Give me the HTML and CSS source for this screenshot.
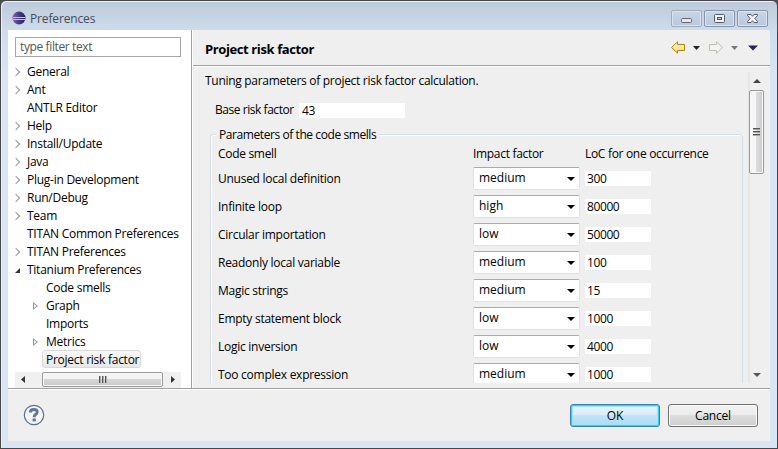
FILE: index.html
```html
<!DOCTYPE html>
<html lang="en">
<head>
<meta charset="utf-8">
<title>Preferences</title>
<link rel="stylesheet" href="styles.css">
</head>
<body>
<div class="window">
  <header class="titlebar">
    <svg class="logo" width="15" height="14" viewBox="0 0 15 14">
      <defs><linearGradient id="globe" x1="0" x2="1"><stop offset="0" stop-color="#756baa"/><stop offset=".5" stop-color="#443b83"/><stop offset="1" stop-color="#242158"/></linearGradient></defs>
      <circle cx="6" cy="7" r="5.8" fill="#e8b9d0"/><circle cx="8" cy="7" r="6.5" fill="url(#globe)"/>
      <path d="M2 6.5H14M2 8.5H14" stroke="#c3c1df" stroke-width="1"/>
    </svg>
    <span class="title">Preferences</span>
    <div class="controls">
      <span><svg width="29" height="15"><rect x="9.5" y="7.5" width="10" height="4" rx="1" fill="#e5e7ea" stroke="#62666f"/></svg></span>
      <span><svg width="29" height="15"><rect x="9.5" y="3.5" width="10" height="8" rx="1" fill="#f0f1f5" stroke="#535b70"/><rect x="12.5" y="6.5" width="4" height="2" fill="#b7c5d8" stroke="#535b70"/></svg></span>
      <span><svg width="29" height="15"><path d="M9.500 3.500H13L14.500 5.300 16 3.500H19.500V4.500L16.800 7.500 19.500 10.500V11.500H16L14.500 9.700 13 11.500H9.500V10.500L12.200 7.500 9.500 4.500Z" fill="#f1f2f5" stroke="#535b70"/></svg></span>
    </div>
  </header>
  <div class="content">
    <main class="panes">
      <aside class="sidebar">
        <div class="filter">type filter text</div>
        <ul class="tree">
          <li class="closed"><span>General</span></li>
          <li class="closed"><span>Ant</span></li>
          <li><span>ANTLR Editor</span></li>
          <li class="closed"><span>Help</span></li>
          <li class="closed"><span>Install/Update</span></li>
          <li class="closed"><span>Java</span></li>
          <li class="closed"><span>Plug-in Development</span></li>
          <li class="closed"><span>Run/Debug</span></li>
          <li class="closed"><span>Team</span></li>
          <li><span>TITAN Common Preferences</span></li>
          <li class="closed"><span>TITAN Preferences</span></li>
          <li class="open"><span>Titanium Preferences</span></li>
          <li class="child"><span>Code smells</span></li>
          <li class="child branch"><span>Graph</span></li>
          <li class="child"><span>Imports</span></li>
          <li class="child branch"><span>Metrics</span></li>
          <li class="child selected"><span>Project risk factor</span></li>
        </ul>
        <div class="hscroll">
          <svg width="27" height="16"><path d="M10 4V11L6 7.500Z" fill="#333"/></svg>
          <div class="hthumb"><i></i><i></i><i></i></div>
          <svg width="18" height="16"><path d="M8 4V11L12 7.500Z" fill="#333"/></svg>
        </div>
      </aside>
      <section class="page">
        <div class="page-head">
          <h1>Project risk factor</h1>
          <svg class="nav" width="90" height="16" viewBox="0 0 90 16">
            <defs><linearGradient id="gold" x2="0" y2="1"><stop offset="0" stop-color="#fffbdc"/><stop offset="1" stop-color="#f5d96b"/></linearGradient></defs>
            <path d="M1.500 7.500 7.500 1.800V4.500H14.500V10.500H7.500V13.200Z" fill="url(#gold)" stroke="#b9800d" stroke-linejoin="round"/>
            <path d="M23 6H30L26.500 10Z" fill="#252525"/>
            <path d="M52.500 7.500 46.500 1.800V4.500H39.500V10.500H46.500V13.200Z" fill="#f3f3ef" stroke="#bdbdb7" stroke-linejoin="round"/>
            <path d="M61 6H68L64.500 10Z" fill="#777"/>
            <path d="M78 5.500H88L83 10.500Z" fill="#27215d"/>
          </svg>
        </div>
        <div class="page-body">
          <div class="form">
            <p class="intro">Tuning parameters of project risk factor calculation.</p>
            <div class="base"><span>Base risk factor</span><div class="field">43</div></div>
            <div class="group">
              <div class="legend">Parameters of the code smells</div>
              <div class="row heading"><span>Code smell</span><span>Impact factor</span><span>LoC for one occurrence</span></div>
              <div class="row"><span>Unused local definition</span><div class="combo">medium</div><div class="field">300</div></div>
              <div class="row"><span>Infinite loop</span><div class="combo">high</div><div class="field">80000</div></div>
              <div class="row"><span>Circular importation</span><div class="combo">low</div><div class="field">50000</div></div>
              <div class="row"><span>Readonly local variable</span><div class="combo">medium</div><div class="field">100</div></div>
              <div class="row"><span>Magic strings</span><div class="combo">medium</div><div class="field">15</div></div>
              <div class="row"><span>Empty statement block</span><div class="combo">low</div><div class="field">1000</div></div>
              <div class="row"><span>Logic inversion</span><div class="combo">low</div><div class="field">4000</div></div>
              <div class="row"><span>Too complex expression</span><div class="combo">medium</div><div class="field">1000</div></div>
            </div>
          </div>
          <div class="vscroll">
            <svg width="16" height="18"><path d="M5 11H13L9 7Z" fill="#444"/></svg>
            <div class="vthumb"><i></i><i></i><i></i></div>
            <svg width="16" height="18"><path d="M5 8H13L9 12Z" fill="#555"/></svg>
          </div>
        </div>
      </section>
    </main>
    <footer class="footer">
      <svg class="help" width="22" height="22" viewBox="0 0 22 22"><circle cx="11" cy="11" r="9.700" fill="#f5f6f8" stroke="#5b7090" stroke-width="1.200"/><path d="M7.300 8.500Q7.300 5.500 10.900 5.500Q14.200 5.500 14.200 8.100Q14.200 9.700 12.500 10.600Q11.200 11.400 11.200 13.200" fill="none" stroke="#5f7698" stroke-width="2.900"/><rect x="9.600" y="14.500" width="3.200" height="2.900" fill="#5f7698"/></svg>
      <button class="ok">OK</button>
      <button>Cancel</button>
    </footer>
  </div>
</div>
</body>
</html>
```
FILE: styles.css
```css
* { box-sizing: border-box; }
body { margin: 0; background: #4d4a50; overflow: hidden; font: 12px/18px "Open Sans", "Noto Sans", sans-serif; letter-spacing: -.26px; color: #000; }
svg { display: block; flex: none; }
.window { width: 778px; height: 449px; border: 1px solid #48464d; border-radius: 6px 6px 0 0; background: linear-gradient(#bdcad9, #cedcec 30px, #d9e5f2 75px); padding: 0 7px 7px; box-shadow: inset 1px 1px #e9f1fa; display: flex; flex-direction: column; }
.titlebar { height: 29px; flex: none; display: flex; align-items: flex-start; }
.logo { margin: 10px 0 0 3px; }
.title { margin: 9px 0 0 4px; color: #454d59; letter-spacing: -.15px; }
.controls { display: flex; gap: 2px; margin: 9px 2px 0 auto; }
.controls span { width: 31px; height: 17px; border: 1px solid #8695ad; border-radius: 2px; background: linear-gradient(#c9d6e5, #b8c9dc); box-shadow: inset 0 0 0 1px #d9e4f0; }
.controls span:first-child { border-color: #9eabb9; }
.content { flex: 1; min-height: 0; background: #efefef; display: flex; flex-direction: column; }
.panes { height: 359px; flex: none; display: flex; border-bottom: 1px solid #a0a0a0; box-shadow: 0 1px #fff; }
.sidebar { width: 184px; flex: none; background: #fff; border-right: 1px solid #a0a0a0; padding: 7px 10px 0 7px; }
.filter { width: 166px; height: 20px; border: 1px solid #a5a5ad; padding: 0 4px; color: #555; letter-spacing: -.4px; }
.filter { letter-spacing: -.38px; }
.tree { list-style: none; height: 315px; margin: 0; padding: 5px 0 0; }
.tree li { height: 18px; line-height: 19px; padding-left: 12px; white-space: nowrap; position: relative; }
.tree .child { padding-left: 31px; }
.closed::before { content: ""; position: absolute; left: -2px; top: 7px; width: 5px; height: 5px; border: solid #969696; border-width: 1px 1px 0 0; transform: rotate(45deg); }
.open::before { content: ""; position: absolute; left: 0; top: 8px; width: 5px; height: 5px; background: #333; clip-path: polygon(100% 0, 100% 100%, 0 100%); }
.branch::before { content: ""; position: absolute; left: 18px; top: 6px; width: 5px; height: 8px; background: #999; clip-path: polygon(0 0, 100% 50%, 0 100%, 0 0, 1px 2px, 1px 6px, 3.5px 50%, 1px 2px); }
.selected span { display: block; width: 99px; height: 18px; line-height: 17px; margin-left: -4px; padding: 0 3px; border: 1px solid #d9d9d9; border-radius: 3px; background: linear-gradient(#f9f9f9, #e7e7e7); }
.hscroll { height: 16px; width: 166px; display: flex; background: #f0f0f0; }
.hthumb { width: 121px; height: 15px; border: 1px solid #999; border-radius: 2px; background: linear-gradient(#f4f4f4 45%, #d6d7da 50%, #c9cacc); box-shadow: inset 0 0 0 1px #f9f9f9; display: flex; justify-content: center; align-items: center; gap: 1px; }
.hthumb i { width: 2px; height: 7px; border-left: 1px solid #555; background: #aaa; }
.page { flex: 1; min-width: 0; border-left: 1px solid #fff; }
.page-head { height: 36px; border-bottom: 1px solid #a0a0a0; box-shadow: 0 1px #fff; display: flex; justify-content: space-between; padding: 0 10px 0 12px; }
h1 { font-size: 13px; line-height: 18px; letter-spacing: -.39px; margin: 10px 0 0; }
.nav { margin-top: 10px; }
.page-body { height: 317px; margin-top: 5px; display: flex; justify-content: space-between; padding: 1px 6px 0 12px; overflow: hidden; }
.form { width: 538px; height: 312px; overflow: hidden; margin-top: -1px; }
.intro { margin: 0; line-height: 19px; height: 18px; letter-spacing: -.29px; }
.base { display: flex; align-items: center; height: 16px; margin: 13px 0 0 10px; }
.base > span { width: 84px; white-space: nowrap; letter-spacing: -.45px; }
.base .field { width: 106px; }
.field { width: 66px; height: 15px; line-height: 15px; padding-left: 3px; background: #fff; letter-spacing: -.4px; }
.group { height: 300px; margin: 16px 0 0 5px; width: 533px; border: 1px solid #d3dee8; border-radius: 3px; box-shadow: inset 1px 1px #fff, 1px 0 #fff; padding: 0 7px; }
.legend { width: max-content; height: 18px; line-height: 20px; margin-top: -10px; margin-left: -2px; padding: 0 3px; background: #efefef; letter-spacing: -.42px; }
.row { height: 28px; display: grid; grid-template-columns: 255px 112px 140px; align-items: center; white-space: nowrap; }
.row .field { margin-bottom: 2px; padding-left: 2px; }
.heading { height: 22px; line-height: 20px; letter-spacing: -.31px; }
.combo { position: relative; width: 107px; height: 23px; margin-bottom: 2px; border: 1px solid #dfe1e5; border-top-color: #aaa; border-radius: 2px; background: #fff; padding-left: 5px; line-height: 20px; letter-spacing: 0; }
.combo::after { content: ""; position: absolute; right: 4px; top: 9px; border: solid transparent; border-width: 4px 4px 0; border-top-color: #000; }
.vscroll { width: 16px; height: 311px; display: flex; flex-direction: column; background: linear-gradient(90deg, #e3e3e3, #efefef 3px); }
.vthumb { height: 84px; width: 15px; margin-left: 1px; border: 1px solid #999; border-radius: 2px; background: linear-gradient(90deg, #f6f6f6 45%, #dcdcde 50%, #c9cacc); box-shadow: inset 0 0 0 1px #f9f9f9; display: flex; flex-direction: column; align-items: center; justify-content: center; gap: 1px; }
.vthumb i { height: 2px; width: 7px; border-top: 1px solid #555; background: #aaa; }
.vscroll svg:last-child { margin-top: auto; }
.footer { flex: 1; display: flex; padding: 15px 12px 0 15px; gap: 8px; }
.help { margin-right: auto; }
button { width: 90px; height: 23px; border: 1px solid #707070; border-radius: 3px; padding: 0; font: inherit; line-height: 20px; letter-spacing: -.2px; background: linear-gradient(#f2f2f2, #ebebeb 48%, #ddd 50%, #cfcfcf); box-shadow: inset 0 0 0 1px #fafafa; color: #000; }
.ok { border-color: #3c7fb1; background: linear-gradient(#e6f4fc, #d9edf9 48%, #c1e3f6 50%, #addcf5); box-shadow: inset 0 0 0 1px #37cdf8, inset 0 0 0 2px #9de7fc; }
```
